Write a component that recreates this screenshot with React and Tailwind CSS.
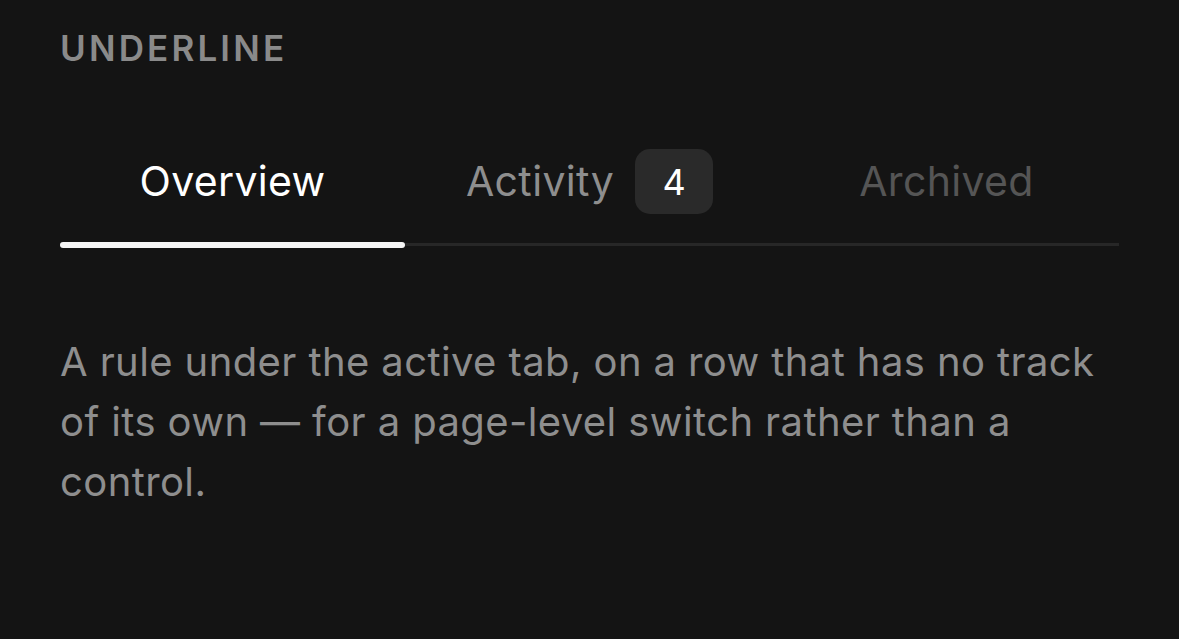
import React from "react";

export default function App() {
  return (
    <div className="min-h-[639px] w-full bg-[#141414] px-[60px] pt-[24px] font-['Inter','Noto_Sans',sans-serif]">
      <div className="text-[35px] leading-[48px] font-semibold tracking-[0.09em] text-[#8a8a8a]">UNDERLINE</div>
      <div className="relative mt-[77px] w-[1059px]">
        <div className="flex gap-[12px] pb-[29px]">
          <div className="flex h-[65px] flex-1 items-center justify-center text-[41px] tracking-[0.35px] text-white">Overview</div>
          <div className="flex h-[65px] flex-1 items-center justify-center gap-[21px] text-[41px] tracking-[0.35px] text-[#8e8e8e]">
            <span>Activity</span>
            <span className="flex h-[65px] w-[78px] items-center justify-center rounded-[15px] bg-[#2a2a2a] text-[36px] tracking-normal text-white">4</span>
          </div>
          <div className="flex h-[65px] flex-1 items-center justify-center text-[41px] tracking-[0.35px] text-[#555555]">Archived</div>
        </div>
        <div className="h-[3px] w-full bg-[#272727]"></div>
        <div className="absolute bottom-[-2px] left-0 h-[6px] w-[345px] rounded-full bg-[#f5f5f5]"></div>
      </div>
      <p className="mt-[86px] w-[1058px] text-[40px] leading-[60px] tracking-[0.4px] text-[#8e8e8e]">
        A rule under the active tab, on a row that has no track of its own — for a page-level switch rather than a control.
      </p>
    </div>
  );
}
